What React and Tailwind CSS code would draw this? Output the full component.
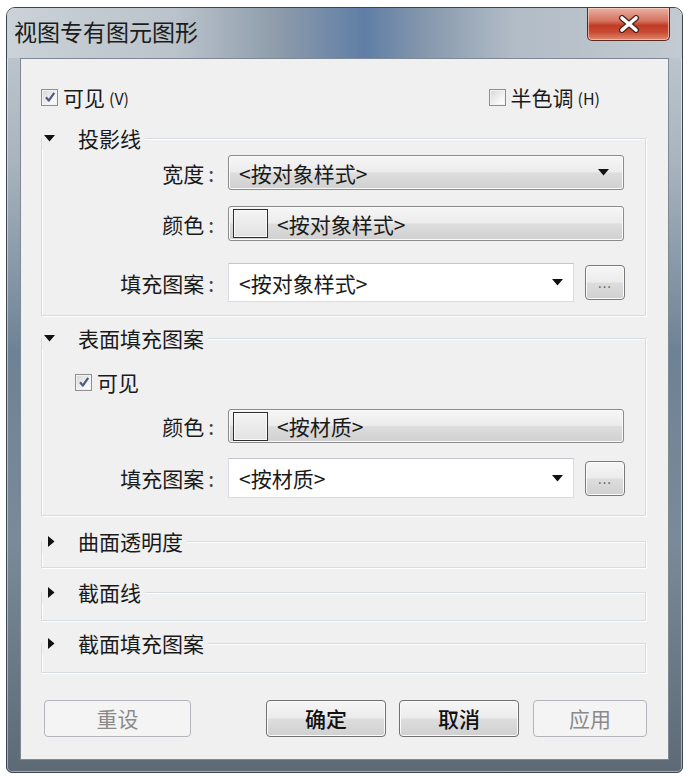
import React from "react";

const F = "font-['Noto_Sans_CJK_SC','Noto_Sans',sans-serif]";

function Check({ checked }) {
  return (
    <span className="flex h-[17px] w-[17px] shrink-0 items-center justify-center border border-[#8e8f8f] bg-[linear-gradient(135deg,#d6d6d6,#f7f7f7_70%,#ffffff)] shadow-[inset_0_0_0_1px_#f2f2f2]">
      {checked && (
        <svg width="12" height="12" viewBox="0 0 12 12">
          <path d="M2 6.2 L4.8 9.6 L10.2 1.8" stroke="#4b5d86" strokeWidth="2.2" fill="none" strokeLinejoin="round" />
        </svg>
      )}
    </span>
  );
}

function TriDown() {
  return (
    <svg width="11" height="7" viewBox="0 0 11 7" className="shrink-0">
      <path d="M0 0 H11 L5.5 6.5 Z" fill="#111" />
    </svg>
  );
}

function TriRight() {
  return (
    <svg width="7" height="11" viewBox="0 0 7 11" className="shrink-0">
      <path d="M0 0 V11 L6.5 5.5 Z" fill="#111" />
    </svg>
  );
}

function Header({ open, text }) {
  return (
    <div className="-mt-[13px] flex h-[24px] items-center">
      <div className="flex h-[24px] items-center bg-[#f0f0f0] pl-[2px] pr-[4px]">
        <span className="flex w-[34px] items-center">{open ? <TriDown /> : <span className="ml-[4px]"><TriRight /></span>}</span>
        <span className="text-[21px] leading-[24px] text-[#1a1a1a]">{text}</span>
      </div>
    </div>
  );
}

function Label({ children }) {
  return (
    <div className="w-[186px] shrink-0 pr-[14px] text-right text-[21px] leading-[24px] text-[#1a1a1a]">
      {children}
      <span className="ml-[4px] text-[#444]">:</span>
    </div>
  );
}

const btnGrad =
  "bg-[linear-gradient(#f6f6f6_0%,#ececec_48%,#dddddd_52%,#d0d0d0_100%)] shadow-[inset_0_0_0_1px_#fbfbfb]";

function ComboBtn({ children, w, h }) {
  return (
    <div
      className={`flex items-center rounded-[3px] border border-[#8b8b8b] ${btnGrad} pl-[10px] pr-[14px]`}
      style={{ width: w, height: h }}
    >
      <span className="flex-1 text-[21px] leading-[24px] text-[#1a1a1a]">{children}</span>
      <TriDown />
    </div>
  );
}

function ColorBtn({ children, h }) {
  return (
    <div
      className={`flex w-[396px] items-center rounded-[3px] border border-[#8b8b8b] ${btnGrad} pl-[4px]`}
      style={{ height: h }}
    >
      <span className="h-[29px] w-[35px] shrink-0 border border-[#2e2e2e] bg-[linear-gradient(#f4f4f4,#e2e2e2)] shadow-[inset_0_0_0_1px_#fafafa]" />
      <span className="ml-[9px] text-[21px] leading-[24px] text-[#1a1a1a]">{children}</span>
    </div>
  );
}

function FillRow({ text, h }) {
  return (
    <div className="flex items-center">
      <Label>填充图案</Label>
      <div
        className="flex w-[346px] items-center border border-[#d9dde3] border-t-[#c2c6cc] bg-white pl-[10px] pr-[10px]"
        style={{ height: h }}
      >
        <span className="flex-1 text-[21px] leading-[24px] text-[#1a1a1a]">{text}</span>
        <TriDown />
      </div>
      <div className={`ml-[11px] flex h-[35px] w-[40px] items-center justify-center rounded-[4px] border border-[#7a7a7a] ${btnGrad}`}>
        <span className="text-[13px] leading-[13px] tracking-[1px] text-[#555]">...</span>
      </div>
    </div>
  );
}

function Button({ children, w, disabled }) {
  return (
    <div
      className={
        disabled
          ? "flex h-[37px] items-center justify-center rounded-[4px] border border-[#b2b6ba] bg-[#f4f4f4] text-[21px] text-[#8a8a8a]"
          : `flex h-[37px] items-center justify-center rounded-[4px] border border-[#707070] ${btnGrad} text-[21px] font-medium text-[#111]`
      }
      style={{ width: w }}
    >
      {children}
    </div>
  );
}

const boxCls = "border border-[#d6dce2] shadow-[inset_1px_1px_0_#ffffff,1px_1px_0_#ffffff]";

export default function App() {
  return (
    <div className={`h-[777px] w-[687px] bg-white pl-[6px] pt-[7px] ${F}`}>
      <div className="flex h-[766px] w-[677px] flex-col rounded-t-[9px] rounded-b-[6px] border border-[#3c4650] bg-[linear-gradient(180deg,#c4ccd4_0%,#a9b4be_20%,#6e8295_45%,#7b8a98_70%,#5d6a76_100%)] shadow-[inset_0_0_0_1px_rgba(255,255,255,0.45)]">
        <div className="flex h-[50px] shrink-0 rounded-t-[8px] bg-[linear-gradient(90deg,#cbd2d8_0%,#bac3cb_25%,#8e9cab_40%,#5f7ea6_53%,#8698ad_62%,#b2bcc6_75%,#c3cad1_100%)]">
          <div className="pl-[7px] pt-[8px] text-[23px] leading-[30px] text-[#1c1c1c]">视图专有图元图形</div>
          <div className="ml-auto mr-[12px] flex h-[33px] w-[83px] items-center justify-center rounded-b-[5px] border border-t-0 border-[#5a2a22] bg-[linear-gradient(180deg,#eab1a4_0%,#d5735f_40%,#c23b26_55%,#c84a33_75%,#e08a6e_100%)] shadow-[inset_0_0_0_1px_rgba(255,220,210,0.6)]">
            <svg width="22" height="18" viewBox="0 0 22 18">
              <path d="M4 3 L18 15 M18 3 L4 15" stroke="#4a2018" strokeWidth="6" strokeLinecap="round" />
              <path d="M4 3 L18 15 M18 3 L4 15" stroke="#ffffff" strokeWidth="3.6" strokeLinecap="round" />
            </svg>
          </div>
        </div>

        <div className="mx-[13px] flex h-[702px] flex-col border border-[#7d8a96] bg-[#f0f0f0] pl-[20px] pr-[22px] pt-[26px]">
          <div className="flex h-[24px] items-center justify-between pr-[46px]">
            <div className="flex items-center">
              <Check checked />
              <span className="ml-[5px] text-[21px] leading-[24px] text-[#1a1a1a]">可见</span>
              <span className="ml-[4px] pt-[2px] text-[16px] leading-[24px] text-[#1a1a1a]">(V)</span>
            </div>
            <div className="flex items-center">
              <Check />
              <span className="ml-[5px] text-[21px] leading-[24px] text-[#1a1a1a]">半色调</span>
              <span className="ml-[4px] pt-[2px] text-[16px] leading-[24px] text-[#1a1a1a]">(H)</span>
            </div>
          </div>

          <div className={`mt-[29px] h-[178px] ${boxCls}`}>
            <Header open text="投影线" />
            <div className="mt-[5px] flex items-center">
              <Label>宽度</Label>
              <ComboBtn w={396} h={35}>&lt;按对象样式&gt;</ComboBtn>
            </div>
            <div className="mt-[16px] flex items-center">
              <Label>颜色</Label>
              <ColorBtn h={35}>&lt;按对象样式&gt;</ColorBtn>
            </div>
            <div className="mt-[22px]">
              <FillRow text="<按对象样式>" h={39} />
            </div>
          </div>

          <div className={`mt-[22px] h-[178px] ${boxCls}`}>
            <Header open text="表面填充图案" />
            <div className="mt-[20px] flex h-[24px] items-center pl-[33px]">
              <Check checked />
              <span className="ml-[5px] text-[21px] leading-[24px] text-[#1a1a1a]">可见</span>
            </div>
            <div className="mt-[15px] flex items-center">
              <Label>颜色</Label>
              <ColorBtn h={34}>&lt;按材质&gt;</ColorBtn>
            </div>
            <div className="mt-[15px]">
              <FillRow text="<按材质>" h={40} />
            </div>
          </div>

          <div className={`mt-[25px] h-[27px] ${boxCls}`}>
            <Header text="曲面透明度" />
          </div>
          <div className={`mt-[24px] h-[29px] ${boxCls}`}>
            <Header text="截面线" />
          </div>
          <div className={`mt-[22px] h-[30px] ${boxCls}`}>
            <Header text="截面填充图案" />
          </div>

          <div className="mt-[27px] flex items-center">
            <div className="ml-[3px]">
              <Button w={147} disabled>重设</Button>
            </div>
            <div className="ml-[75px]">
              <Button w={120}>确定</Button>
            </div>
            <div className="ml-[13px]">
              <Button w={120}>取消</Button>
            </div>
            <div className="ml-[14px]">
              <Button w={114} disabled>应用</Button>
            </div>
          </div>
        </div>
      </div>
    </div>
  );
}
